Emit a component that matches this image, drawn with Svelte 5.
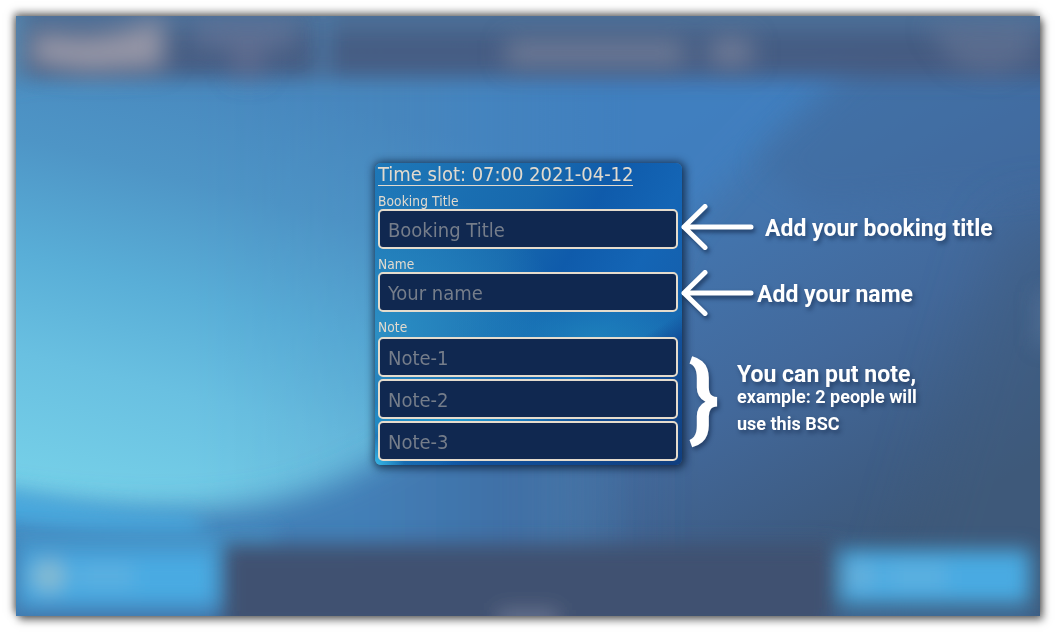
<script>
  const fields = [
    { label: 'Booking Title', inputs: ['Booking Title'] },
    { label: 'Name', inputs: ['Your name'] },
    { label: 'Note', inputs: ['Note-1', 'Note-2', 'Note-3'] }
  ];
</script>

{#snippet arrow()}
  <svg class="arrow" width="74" height="50" viewBox="0 0 74 50" aria-hidden="true">
    <path d="M25 4.5 4 25 25 45.5M4 25H71" />
  </svg>
{/snippet}

<main class="screen">
  <svg class="backdrop" viewBox="0 0 1024 600" aria-hidden="true">
    <defs>
      <linearGradient id="base" gradientUnits="userSpaceOnUse" x1="560" y1="150" x2="800" y2="570">
        <stop offset="0" stop-color="#437db8" />
        <stop offset=".3" stop-color="#4373ab" />
        <stop offset=".6" stop-color="#42689a" />
        <stop offset=".85" stop-color="#3e5d85" />
        <stop offset="1" stop-color="#3d5879" />
      </linearGradient>
      <linearGradient id="sky" gradientUnits="userSpaceOnUse" x1="250" y1="70" x2="140" y2="500">
        <stop offset="0" stop-color="#4888be" />
        <stop offset=".25" stop-color="#4e95c6" />
        <stop offset=".5" stop-color="#59aed7" />
        <stop offset=".72" stop-color="#69c0e1" />
        <stop offset="1" stop-color="#76d0e8" />
      </linearGradient>
      <linearGradient id="fade" gradientUnits="userSpaceOnUse" x1="180" y1="0" x2="620" y2="0">
        <stop offset="0" stop-color="#fff" />
        <stop offset=".45" stop-color="#d4d4d4" />
        <stop offset=".75" stop-color="#666" />
        <stop offset="1" stop-color="#000" />
      </linearGradient>
      <linearGradient id="shore" gradientUnits="userSpaceOnUse" x1="340" y1="0" x2="660" y2="0">
        <stop offset="0" stop-color="#4380b8" />
        <stop offset=".5" stop-color="#406fa5" />
        <stop offset="1" stop-color="#406698" stop-opacity="0" />
      </linearGradient>
      <mask id="side"><rect width="1024" height="600" fill="url(#fade)" /></mask>
      <filter id="b10" x="-30%" y="-60%" width="160%" height="220%"><feGaussianBlur stdDeviation="10" /></filter>
      <filter id="b13" x="-30%" y="-60%" width="160%" height="220%"><feGaussianBlur stdDeviation="12" /></filter>
      <filter id="b16" x="-40%" y="-60%" width="180%" height="220%"><feGaussianBlur stdDeviation="15" /></filter>
      <filter id="b30" x="-60%" y="-60%" width="220%" height="220%"><feGaussianBlur stdDeviation="30" /></filter>
    </defs>
    <rect width="1024" height="600" fill="url(#base)" />
    <path d="M400 40H860L760 110 670 210 640 280 400 200Z" fill="#3f80c2" opacity=".75" filter="url(#b16)" />
    <path d="M850 30H1060V170L800 190 740 150Z" fill="#40689a" opacity=".45" filter="url(#b16)" />
    <path d="M990 200H1100V640H860Z" fill="#3f5b7d" opacity=".45" filter="url(#b30)" />
    <rect width="1024" height="600" fill="url(#sky)" mask="url(#side)" />
    <path d="M-80 470C40 494 160 502 250 486 340 468 400 425 500 350H720V700H-80Z" fill="url(#shore)" filter="url(#b16)" />
    <path d="M-60 466C20 480 90 496 180 498L190 522C80 522 20 514-60 500Z" fill="#47ade4" opacity=".8" filter="url(#b10)" />
    <path d="M-10 514H260V545H-10Z" fill="#4695c9" opacity=".8" filter="url(#b10)" />
    <g filter="url(#b10)">
      <rect x="-40" y="-20" width="1104" height="82" fill="#475a7e" opacity=".9" />
      <rect x="-40" y="-26" width="1104" height="40" fill="#4e76a0" opacity=".7" />
      <rect x="300" y="-10" width="14" height="70" fill="#4d7aa8" opacity=".8" />
      <rect x="-30" y="-10" width="38" height="75" fill="#5485af" />
    </g>
    <g filter="url(#b13)">
      <path d="M16 16 70 20 100 16 148 2V52L70 56 14 48Z" fill="#a09dab" opacity=".88" />
      <rect x="178" y="6" width="102" height="26" fill="#7680a0" opacity=".5" />
      <rect x="216" y="26" width="32" height="36" fill="#75799a" opacity=".45" />
      <rect x="490" y="24" width="178" height="26" fill="#7f869c" opacity=".7" />
      <rect x="694" y="22" width="42" height="28" fill="#7f869c" opacity=".75" />
      <path d="M910 10 1020 6V40L980 58 940 50Z" fill="#73809d" opacity=".45" />
    </g>
    <g filter="url(#b10)">
      <rect x="206" y="528" width="614" height="92" fill="#405171" />
      <rect x="-40" y="532" width="45" height="92" fill="#4379ae" />
      <rect x="4" y="535" width="197" height="54" fill="#4aaae2" />
      <rect x="4" y="602" width="200" height="26" fill="#406798" />
      <rect x="824" y="534" width="190" height="54" fill="#4aaae2" />
      <rect x="812" y="602" width="214" height="26" fill="#406798" />
      <circle cx="33" cy="560" r="16" fill="#96bfcc" opacity=".8" />
      <rect x="62" y="550" width="56" height="20" fill="#70b6de" opacity=".5" />
      <rect x="830" y="548" width="28" height="24" fill="#79b4d7" opacity=".6" />
      <rect x="872" y="549" width="58" height="22" fill="#70b6de" opacity=".5" />
      <rect x="482" y="594" width="60" height="26" fill="#737e98" opacity=".7" />
      <rect x="1020" y="276" width="24" height="54" fill="#5d7c9f" opacity=".5" />
    </g>
  </svg>

  <section class="dialog">
    <h1>Time slot: 07:00 2021-04-12</h1>
    {#each fields as field}
      <div class="field">
        <span class="label">{field.label}</span>
        <div class="inputs">
          {#each field.inputs as text}
            <input type="text" placeholder={text} aria-label={text} />
          {/each}
        </div>
      </div>
    {/each}
  </section>

  <aside class="notes">
    <div class="note">{@render arrow()}<p class="first">Add your booking title</p></div>
    <div class="note second">{@render arrow()}<p>Add your name</p></div>
    <div class="note group">
      <span class="brace">{'}'}</span>
      <div class="copy">
        <p>You can put note,</p>
        <p class="small">example: 2 people will<br />use this BSC</p>
      </div>
    </div>
  </aside>
</main>

<style>
  :global(body) {
    margin: 0;
    background: #fff;
    overflow: hidden;
  }
  .screen {
    position: relative;
    box-sizing: border-box;
    width: 1024px;
    height: 600px;
    margin: 16px;
    padding: 147px 0 0 359px;
    display: flex;
    align-items: flex-start;
    box-shadow:
      -2px -3px 8px rgba(0, 0, 0, 0.55),
      3px 4px 8px rgba(0, 0, 0, 0.55);
  }
  .backdrop {
    position: absolute;
    inset: 0;
    width: 1024px;
    height: 600px;
    overflow: hidden;
  }
  .dialog {
    position: relative;
    box-sizing: border-box;
    flex: none;
    width: 307px;
    height: 302px;
    padding: 0 4px 0 3px;
    border-radius: 6px;
    font-family: 'DejaVu Sans Condensed', 'DejaVu Sans', sans-serif;
    font-stretch: condensed;
    color: #e2dace;
    background:
      radial-gradient(circle at 0 100%, #36b7e6 0, rgba(54, 183, 230, 0) 30px),
      radial-gradient(ellipse 140px 20px at 75px 257px, #239bd0, rgba(35, 155, 208, 0)),
      linear-gradient(148deg, rgba(17, 76, 147, 0) 69%, #12509a 74%, #103e7e 100%),
      radial-gradient(ellipse 150px 60px at 220px 175px, rgba(31, 132, 188, 0.85), rgba(31, 132, 188, 0)),
      radial-gradient(ellipse 190px 150px at 0 170px, #2c8fc4, rgba(44, 143, 196, 0)),
      linear-gradient(118deg, #1e78b8 0%, #1768ad 38%, #0f5bab 52%, #1465b5 68%, #1558a2 100%);
    box-shadow: 1px 1px 9px 2px rgba(5, 22, 45, 0.75);
  }
  h1 {
    width: 255px;
    height: 22px;
    margin: 0;
    border-bottom: 1px solid #e2dace;
    font-size: 20px;
    font-weight: 400;
    line-height: 22px;
    letter-spacing: -0.02px;
    white-space: nowrap;
  }
  .field {
    padding-top: 7px;
  }
  .label {
    display: block;
    height: 16px;
    font-size: 13.6px;
    line-height: 16px;
    letter-spacing: 0.1px;
  }
  .inputs {
    display: grid;
    gap: 2px;
  }
  .field:last-child .inputs {
    padding-top: 2px;
  }
  input {
    box-sizing: border-box;
    width: 300px;
    height: 40px;
    margin: 0;
    padding: 2px 8px 0;
    border: 2px solid #e5dccd;
    border-radius: 5px;
    background: #102850;
    color: #e2dace;
    font: inherit;
    font-size: 20px;
  }
  input::placeholder {
    color: #757d8a;
    opacity: 1;
  }
  .notes {
    position: relative;
    width: 340px;
    padding-top: 39px;
    color: #fff;
    font-family: Roboto, sans-serif;
    font-size: 23px;
    font-weight: 700;
    text-shadow: 2px 3px 4px rgba(10, 28, 60, 0.5);
  }
  .note {
    display: flex;
    align-items: center;
    height: 50px;
    white-space: nowrap;
  }
  .second {
    margin-top: 16px;
  }
  .arrow {
    flex: none;
    margin: 0 1px 0 -2px;
    overflow: visible;
    filter: drop-shadow(2px 3px 2px rgba(10, 28, 60, 0.6));
  }
  .arrow path {
    fill: none;
    stroke: #fff;
    stroke-width: 5;
    stroke-linecap: round;
    stroke-linejoin: round;
  }
  p {
    margin: 3px 0 0 2px;
    line-height: 27px;
  }
  p.first {
    margin-left: 10px;
  }
  .group {
    align-items: flex-start;
    margin-top: 33px;
    height: 110px;
  }
  .brace {
    width: 49px;
    padding-left: 6px;
    box-sizing: content-box;
    font-size: 95px;
    line-height: 93px;
  }
  .copy {
    padding-top: 7px;
  }
  .copy p {
    margin: 3px 0 0;
    line-height: 27px;
  }
  .copy .small {
    margin-top: -5px;
    font-size: 18px;
  }
</style>
